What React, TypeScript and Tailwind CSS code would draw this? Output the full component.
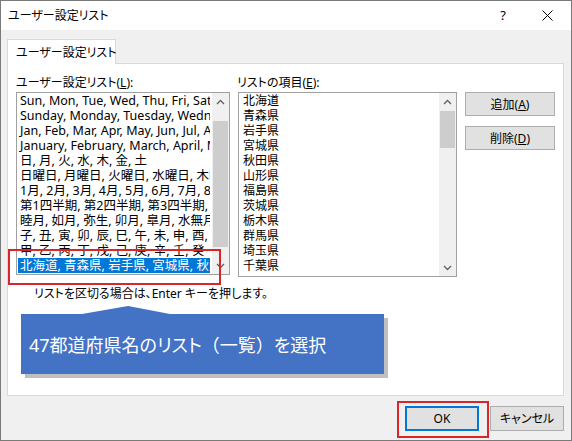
import React from 'react';

const leftItems = [
  'Sun, Mon, Tue, Wed, Thu, Fri, Sat',
  'Sunday, Monday, Tuesday, Wednesday, Thursday, Friday, Saturday',
  'Jan, Feb, Mar, Apr, May, Jun, Jul, Aug, Sep, Oct, Nov, Dec',
  'January, February, March, April, May, June, July',
  '日, 月, 火, 水, 木, 金, 土',
  '日曜日, 月曜日, 火曜日, 水曜日, 木曜日, 金曜日, 土曜日',
  '1月, 2月, 3月, 4月, 5月, 6月, 7月, 8月, 9月',
  '第1四半期, 第2四半期, 第3四半期, 第4四半期',
  '睦月, 如月, 弥生, 卯月, 皐月, 水無月, 文月',
  '子, 丑, 寅, 卯, 辰, 巳, 午, 未, 申, 酉, 戌, 亥',
  '甲, 乙, 丙, 丁, 戊, 己, 庚, 辛, 壬, 癸',
];

const prefs = ['北海道', '青森県', '岩手県', '宮城県', '秋田県', '山形県', '福島県', '茨城県', '栃木県', '群馬県', '埼玉県', '千葉県'];

const Chevron: React.FC<{ up?: boolean }> = ({ up }) => (
  <div className="h-[17px] flex items-center justify-center">
    <svg width="9" height="6" viewBox="0 0 9 6">
      <polyline
        points={up ? '1,5 4.5,1.5 8,5' : '1,1 4.5,4.5 8,1'}
        fill="none"
        stroke="#606060"
        strokeWidth="1.3"
      />
    </svg>
  </div>
);

// windows-10 style vertical scrollbar
const ScrollBar: React.FC<{ offset: string; thumb: string }> = ({ offset, thumb }) => (
  <div className="w-[17px] bg-[#f0f0f0] flex flex-col shrink-0">
    <Chevron up />
    <div className="flex-1">
      <div className={`mx-px bg-[#cdcdcd] ${offset} ${thumb}`} />
    </div>
    <Chevron />
  </div>
);

const App: React.FC = () => {
  return (
    <div className="relative w-[572px] h-[441px] border border-[#7a7a7a] bg-[#f0f0f0] flex flex-col text-black text-[12px] font-['Noto_Sans','Noto_Sans_CJK_JP',sans-serif] [font-feature-settings:'palt'] overflow-hidden">
      {/* Title bar */}
      <div className="h-[29px] bg-white flex items-center pl-[7px] shrink-0">
        <span className="text-[12px] leading-[15px]">ユーザー設定リスト</span>
        <span className="ml-auto text-[13px] mr-[36px]">?</span>
        <svg width="11" height="11" viewBox="0 0 11 11" className="mr-[18px]">
          <line x1="0.5" y1="0.5" x2="10.5" y2="10.5" stroke="#000" strokeWidth="1" />
          <line x1="10.5" y1="0.5" x2="0.5" y2="10.5" stroke="#000" strokeWidth="1" />
        </svg>
      </div>

      {/* Body */}
      <div className="pl-[6px] pt-[9px] flex flex-col">
        <div className="relative z-10 -mb-px w-[109px] h-[25px] bg-white border border-b-0 border-[#d9d9d9] flex items-center pl-[8px]">
          <span className="leading-[15px] whitespace-nowrap">ユーザー設定リスト</span>
        </div>
        <div className="w-[557px] h-[333px] bg-white border border-[#d9d9d9] pl-[8px] pt-[11px] flex">
          {/* Left column */}
          <div className="w-[214px] flex flex-col">
            <div className="leading-[15px] whitespace-nowrap">
              ユーザー設定リスト(<span className="underline">L</span>):
            </div>
            <div className="mt-[2px] h-[183px] border border-[#a0a0a0] flex">
              <div className="flex-1 min-w-0 overflow-hidden pl-px pr-[2px] text-[12.5px]">
                {leftItems.map((t) => (
                  <div key={t} className="px-[2px] leading-[15px] h-[15px] whitespace-nowrap overflow-hidden">
                    {t}
                  </div>
                ))}
                <div className="px-[2px] leading-[15px] h-[15px] whitespace-nowrap overflow-hidden bg-[#0078d7] text-white">
                  北海道, 青森県, 岩手県, 宮城県, 秋田県, 山形県
                </div>
              </div>
              <ScrollBar offset="mt-[11px]" thumb="h-[126px]" />
            </div>
            <div className="mt-[11px] pl-[18px] leading-[15px] whitespace-nowrap">
              リストを区切る場合は、Enter キーを押します。
            </div>
          </div>

          {/* Right column */}
          <div className="ml-[8px] w-[219px] flex flex-col">
            <div className="leading-[15px] -ml-px whitespace-nowrap">
              リストの項目(<span className="underline">E</span>):
            </div>
            <div className="mt-[2px] h-[185px] border border-[#a0a0a0] flex">
              <div className="flex-1 overflow-hidden pl-[4px]">
                {prefs.map((p) => (
                  <div key={p} className="leading-[15px] h-[15px]">
                    {p}
                  </div>
                ))}
              </div>
              <ScrollBar offset="mt-px" thumb="h-[37px]" />
            </div>
          </div>

          {/* Buttons */}
          <div className="ml-[8px] w-[90px] flex flex-col pt-[17px]">
            <button className="h-[24px] bg-[#e1e1e1] border border-[#adadad] leading-[15px]">
              追加(<span className="underline">A</span>)
            </button>
            <button className="mt-[10px] h-[24px] bg-[#e1e1e1] border border-[#adadad] leading-[15px]">
              削除(<span className="underline">D</span>)
            </button>
          </div>
        </div>

        {/* Bottom buttons */}
        <div className="w-[557px] flex justify-end gap-[11px] mt-[10px]">
          <button className="w-[74px] h-[25px] bg-[#e1e1e1] border-2 border-[#0078d7] leading-[15px]">OK</button>
          <button className="w-[74px] h-[25px] bg-[#e1e1e1] border border-[#adadad] leading-[15px]">キャンセル</button>
        </div>
      </div>

      {/* Annotation: red highlight on selected list row */}
      <div className="absolute left-[7px] top-[248px] w-[213px] h-[36px] border-2 border-[#d9262b] z-20" />

      {/* Annotation: callout */}
      <div className="absolute left-[20px] top-[303px] z-20">
        <svg width="370" height="76" viewBox="0 0 370 76" className="absolute left-0 top-0">
          <polygon points="4,14 65,14 111,6 152,14 367,14 367,74 4,74" fill="#000" opacity="0.25" />
        </svg>
        <svg width="370" height="76" viewBox="0 0 370 76" className="absolute left-0 top-0">
          <polygon points="0,10 61,10 107,2 149,10 363,10 363,70 0,70" fill="#4472c4" />
        </svg>
        <div className="absolute left-[8px] top-[29px] whitespace-nowrap text-white text-[18px] leading-[24px]">
          47都道府県名のリスト<span className="[font-feature-settings:normal]">（</span>一覧<span className="[font-feature-settings:normal]">）</span>を選択
        </div>
      </div>

      {/* Annotation: red highlight on OK */}
      <div className="absolute left-[396px] top-[400px] w-[92px] h-[37px] border-2 border-[#d9262b] z-20" />
    </div>
  );
};

export default App;
